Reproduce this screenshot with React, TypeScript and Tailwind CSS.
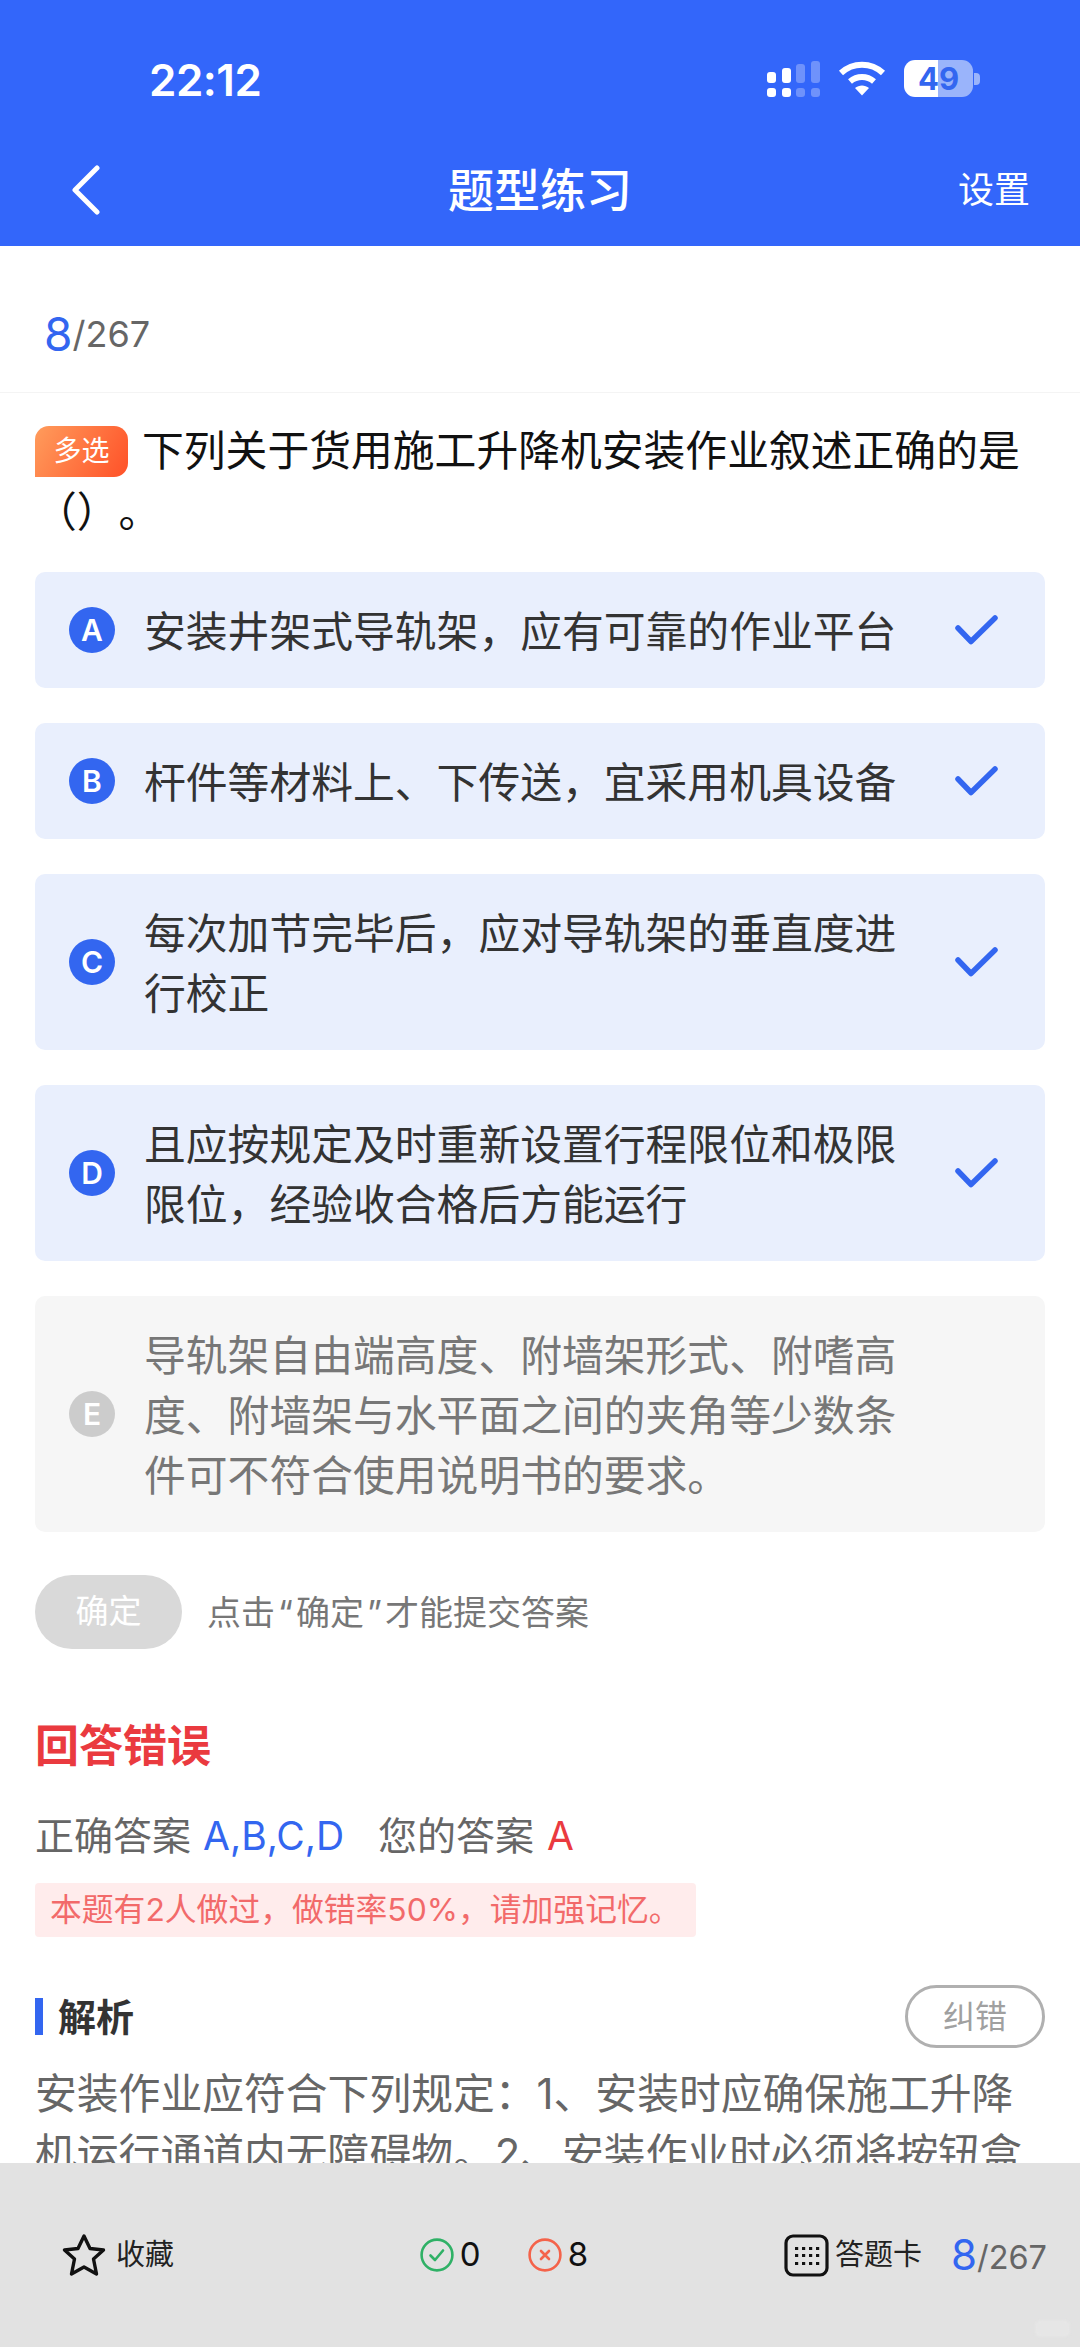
const options = [
  { key: 'A', text: '安装井架式导轨架，应有可靠的作业平台', checked: true },
  { key: 'B', text: '杆件等材料上、下传送，宜采用机具设备', checked: true },
  { key: 'C', text: '每次加节完毕后，应对导轨架的垂直度进行校正', checked: true },
  { key: 'D', text: '且应按规定及时重新设置行程限位和极限限位，经验收合格后方能运行', checked: true },
  { key: 'E', text: '导轨架自由端高度、附墙架形式、附嗜高度、附墙架与水平面之间的夹角等少数条件可不符合使用说明书的要求。', checked: false },
]

function SignalIcon() {
  return (
    <svg width="54" height="36" viewBox="0 0 54 36">
      <rect x="0" y="11" width="9" height="11" rx="3" fill="#fff" />
      <rect x="15" y="7" width="9" height="15" rx="3" fill="#fff" />
      <rect x="29" y="3" width="9" height="19" rx="3" fill="#6f92fb" />
      <rect x="44" y="0" width="9" height="22" rx="3" fill="#6f92fb" />
      <rect x="0" y="27" width="9" height="9" rx="3" fill="#fff" />
      <rect x="15" y="27" width="9" height="9" rx="3" fill="#fff" />
      <rect x="29" y="27" width="9" height="9" rx="3" fill="#6f92fb" />
      <rect x="44" y="27" width="9" height="9" rx="3" fill="#6f92fb" />
    </svg>
  )
}

function WifiIcon() {
  return (
    <svg width="48" height="35" viewBox="0 0 48 35" fill="none" stroke="#fff" strokeWidth="6">
      <path d="M3 12 C15 1 33 1 45 12" />
      <path d="M12 20.5 C19 14.5 29 14.5 36 20.5" />
      <path d="M17 27 L24 34.5 L31 27 C27 23.5 21 23.5 17 27 Z" fill="#fff" stroke="none" />
    </svg>
  )
}

function CheckMark() {
  return (
    <svg width="44" height="32" viewBox="0 0 44 32" fill="none" stroke="#3366f0" strokeWidth="5.5" strokeLinecap="round" strokeLinejoin="round">
      <path d="M4 14 L17 27.5 L41 4" />
    </svg>
  )
}

function StarIcon() {
  return (
    <svg width="44" height="44" viewBox="0 0 44 44" fill="none" stroke="#111" strokeWidth="3.4" strokeLinejoin="round">
      <path d="M22 3 L28 15.5 L41.5 17 L31.5 26 L34.5 41 L22 34 L9.5 41 L12.5 26 L2.5 17 L16 15.5 Z" />
    </svg>
  )
}

function CardIcon() {
  const xs = [15, 22, 29, 36]
  const ys = [13, 20, 28]
  return (
    <svg width="45" height="43" viewBox="0 0 45 43">
      <rect x="2" y="2" width="41" height="39" rx="7" fill="none" stroke="#111" strokeWidth="3.2" />
      {ys.map((y) => xs.map((x) => <rect key={`${x}-${y}`} x={x - 4} y={y} width="3.2" height="3" fill="#111" />))}
    </svg>
  )
}

export default function App() {
  return (
    <div className="relative w-[1080px] h-[2347px] flex flex-col overflow-hidden bg-white font-['Inter','Noto_Sans_CJK_SC',sans-serif]">
      {/* header */}
      <div className="shrink-0 h-[246px] bg-[#3366fa] text-white">
        <div className="h-[140px] flex items-start justify-between pl-[149px] pr-[100px] pt-[55px]">
          <span className="text-[44px] leading-[50px] font-semibold tracking-[-0.5px]">22:12</span>
          <div className="flex items-center pt-[5px]">
            <SignalIcon />
            <div className="ml-[17px] -mt-[1px]"><WifiIcon /></div>
            <div className="ml-[18px] w-[69px] h-[37px] rounded-[11px] bg-[linear-gradient(90deg,#fff_50%,#9ab4fb_50%)] flex items-center justify-center text-[31px] leading-none font-bold text-[#3366f0]">
              49
            </div>
            <div className="ml-[1px] w-[6px] h-[12px] rounded-r-[4px] bg-[#9ab4fb]" />
          </div>
        </div>
        <div className="grid grid-cols-3 items-center pl-[70px] pr-[50px] pt-[20px]">
          <svg width="32" height="50" viewBox="0 0 32 50" fill="none" stroke="#fff" strokeWidth="5" strokeLinecap="round" strokeLinejoin="round">
            <path d="M27 3 L5 25 L27 47" />
          </svg>
          <span className="justify-self-center text-[46px] leading-[60px] font-medium whitespace-nowrap -ml-[20px]">题型练习</span>
          <span className="justify-self-end text-[36px] leading-[50px]">设置</span>
        </div>
      </div>

      {/* content, cut off by the bottom bar */}
      <div className="flex-1 min-h-0 overflow-hidden">
        <div className="h-[147px] pl-[44px] pt-[57px] border-b border-[#f4f4f4] flex items-start">
          <span className="text-[46px] leading-[62px] text-[#3366f0]">8</span>
          <span className="text-[36px] leading-[62px] text-[#666]">/267</span>
        </div>

        <div className="px-[35px]">
          <p className="pt-[28px] text-[41.8px] leading-[61px] text-[#111] [text-spacing-trim:space-all]">
            <span className="inline-flex align-[5px] w-[93px] h-[51px] mr-[14px] items-center justify-center rounded-tl-[14px] rounded-tr-[14px] rounded-br-[14px] bg-[linear-gradient(120deg,#ff9c5c,#ff5128)] text-[28px] leading-none text-white">
              多选
            </span>
            下列关于货用施工升降机安装作业叙述正确的是（）。
          </p>

          <div className="mt-[29px] flex flex-col gap-[35px]">
            {options.map((o) => (
              <div
                key={o.key}
                className={`flex items-center rounded-[10px] pl-[34px] pr-[47px] py-[28px] ${o.checked ? 'bg-[#e9effd]' : 'bg-[#f6f6f6]'}`}
              >
                <div className={`shrink-0 w-[46px] h-[46px] rounded-full flex items-center justify-center text-[30px] leading-none font-semibold text-white ${o.checked ? 'bg-[#3366f0]' : 'bg-[#cccccc]'}`}>
                  {o.key}
                </div>
                <p className={`ml-[29px] -mb-[2px] mt-[2px] w-[760px] text-[41.8px] leading-[60px] ${o.checked ? 'text-[#333]' : 'text-[#777]'}`}>
                  {o.text}
                </p>
                {o.checked && <div className="ml-auto"><CheckMark /></div>}
              </div>
            ))}
          </div>

          <div className="mt-[43px] flex items-center">
            <div className="w-[147px] h-[74px] rounded-[37px] bg-[#d9d9d9] flex items-center justify-center text-[33px] text-white">确定</div>
            <span className="ml-[25px] text-[34px] text-[#777]">点击<span className="px-[3px]">“</span>确定<span className="px-[3px]">”</span>才能提交答案</span>
          </div>

          <div className="mt-[67px] text-[44px] leading-[60px] font-bold text-[#ea3a3f]">回答错误</div>

          <div className="mt-[35px] flex items-center text-[39px] leading-[50px] text-[#666]">
            <span>正确答案</span>
            <span className="ml-[12px] text-[#3366f0]">A,B,C,D</span>
            <span className="ml-[34px]">您的答案</span>
            <span className="ml-[13px] text-[#ea3a3f]">A</span>
          </div>

          <div className="mt-[22px] w-fit h-[54px] px-[15px] rounded-[4px] bg-[#ffecec] flex items-center text-[31.8px] text-[#f26a6a] whitespace-nowrap">
            本题有2人做过，做错率50%，请加强记忆。
          </div>

          <div className="mt-[48px] flex items-center justify-between">
            <div className="flex items-center">
              <div className="w-[8px] h-[37px] bg-[#3366f0]" />
              <span className="ml-[15px] text-[38px] leading-[50px] font-bold text-[#333]">解析</span>
            </div>
            <div className="w-[140px] h-[63px] rounded-[32px] border-[3px] border-[#b0b0b0] flex items-center justify-center text-[32px] text-[#a0a0a0]">纠错</div>
          </div>

          <p className="mt-[16px] text-[41.8px] leading-[60px] text-[#666]">
            安装作业应符合下列规定：1、安装时应确保施工升降机运行通道内无障碍物。2、安装作业时必须将按钮盒或操作盒移至笼外。
          </p>
        </div>
      </div>

      {/* bottom bar */}
      <div className="relative shrink-0 h-[184px] bg-[#e2e2e2] flex items-center justify-between pl-[62px] pr-[33px]">
        <div className="flex items-center">
          <StarIcon />
          <span className="ml-[10px] text-[29px] text-[#222]">收藏</span>
        </div>
        <div className="ml-[50px] flex items-center text-[33px] text-[#111]">
          <svg width="34" height="34" viewBox="0 0 34 34" fill="none" stroke="#2fb166" strokeWidth="2.6" strokeLinecap="round" strokeLinejoin="round">
            <circle cx="17" cy="17" r="15.4" />
            <path d="M10.5 17.5 L15 22 L23 12.5" />
          </svg>
          <span className="ml-[6px]">0</span>
          <svg className="ml-[47px]" width="34" height="34" viewBox="0 0 34 34" fill="none" stroke="#f4634a" strokeWidth="2.6" strokeLinecap="round">
            <circle cx="17" cy="17" r="15.4" />
            <path d="M13 13 L21 21 M21 13 L13 21" />
          </svg>
          <span className="ml-[6px]">8</span>
        </div>
        <div className="flex items-center">
          <CardIcon />
          <span className="ml-[6px] text-[29px] text-[#222]">答题卡</span>
          <span className="ml-[29px] text-[42px] leading-none text-[#3366f0]">8</span>
          <span className="text-[32.5px] leading-none text-[#666] mt-[6px]">/267</span>
        </div>
        {/* faint watermark in the corner */}
        <div className="absolute right-[10px] bottom-[10px] w-[35px] h-[17px] rounded-[6px] bg-[#e6e6e6] blur-[1px]" />
      </div>
    </div>
  )
}
